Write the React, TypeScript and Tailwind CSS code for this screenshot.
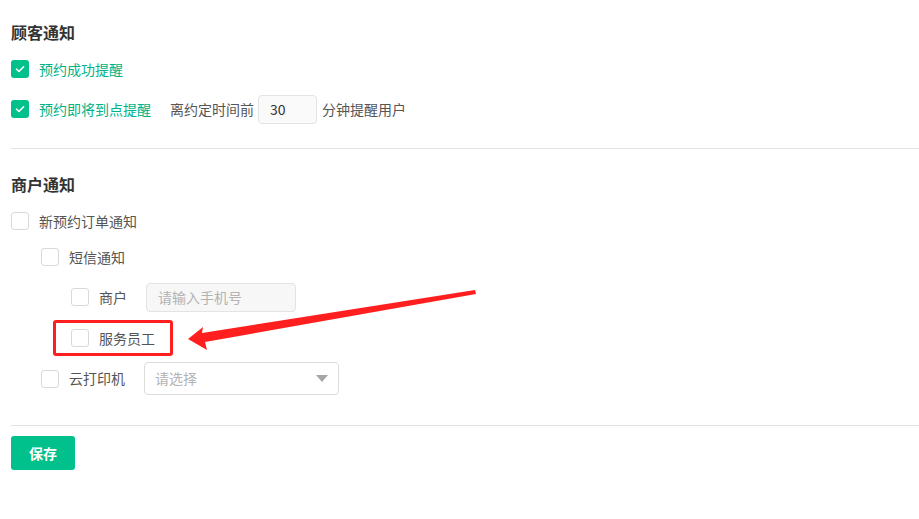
import React from "react";

const font = { fontFamily: '"Noto Sans CJK SC", "Noto Sans", sans-serif' };

function Box({ checked }: { checked?: boolean }) {
  if (checked) {
    return (
      <span className="w-[18px] h-[18px] rounded-[3px] bg-[#00c08b] flex items-center justify-center shrink-0">
        <svg width="12" height="12" viewBox="0 0 12 12" fill="none">
          <path d="M2.5 6.2l2.4 2.3L9.6 3.8" stroke="white" strokeWidth="1.6" strokeLinecap="round" strokeLinejoin="round" />
        </svg>
      </span>
    );
  }
  return <span className="w-[18px] h-[18px] rounded-[3px] border border-[#d9d9d9] bg-white shrink-0" />;
}

export default function App() {
  return (
    <div className="relative w-[919px] h-[519px] bg-white overflow-hidden" style={font}>
      <div className="pl-[11px] pt-[20px]">
        <div className="h-[24px] flex items-center text-[16px] font-bold text-[#333]">顾客通知</div>

        <div className="mt-[11px] h-[28px] flex items-center">
          <Box checked />
          <span className="ml-[10px] text-[14px] text-[#00b386]">预约成功提醒</span>
        </div>

        <div className="mt-[11px] h-[30px] flex items-center">
          <Box checked />
          <span className="ml-[10px] text-[14px] text-[#00b386]">预约即将到点提醒</span>
          <span className="ml-[19px] text-[14px] text-[#555]">离约定时间前</span>
          <input
            defaultValue="30"
            className="ml-[4px] w-[59px] h-[29px] rounded-[4px] border border-[#e3e3e3] bg-[#fafafa] px-[11px] text-[14px] text-[#333] outline-none"
          />
          <span className="ml-[5px] text-[14px] text-[#555]">分钟提醒用户</span>
        </div>

        <div className="mt-[24px] border-t border-[#e2e2e2]" />

        <div className="mt-[23px] h-[24px] flex items-center text-[16px] font-bold text-[#333]">商户通知</div>

        <div className="mt-[11px] h-[28px] flex items-center">
          <Box />
          <span className="ml-[10px] text-[14px] text-[#555]">新预约订单通知</span>
        </div>

        <div className="mt-[8px] h-[28px] flex items-center pl-[30px]">
          <Box />
          <span className="ml-[10px] text-[14px] text-[#555]">短信通知</span>
        </div>

        <div className="mt-[11px] h-[30px] flex items-center pl-[60px]">
          <Box />
          <span className="ml-[10px] text-[14px] text-[#555]">商户</span>
          <input
            disabled
            placeholder="请输入手机号"
            className="ml-[19px] w-[150px] h-[29px] rounded-[4px] border border-[#e3e3e3] bg-[#f7f7f7] px-[11px] text-[14px] placeholder:text-[#b3b3b3] outline-none"
          />
        </div>

        <div className="mt-[8px] pl-[42px]">
          <div className="w-[120px] h-[36px] border-[3px] border-[#ff1f1f] rounded-[3px] flex items-center pl-[15px]">
            <Box />
            <span className="ml-[10px] text-[14px] text-[#555]">服务员工</span>
          </div>
        </div>

        <div className="mt-[6px] h-[33px] flex items-center pl-[30px]">
          <Box />
          <span className="ml-[10px] text-[14px] text-[#555]">云打印机</span>
          <div className="ml-[19px] w-[195px] h-[33px] rounded-[4px] border border-[#dcdcdc] bg-white flex items-center justify-between px-[10px]">
            <span className="text-[14px] text-[#b3b3b3]">请选择</span>
            <svg width="12" height="7" viewBox="0 0 12 7">
              <path d="M0 0h12L6 7z" fill="#a6a6a6" />
            </svg>
          </div>
        </div>

        <div className="mt-[30px] border-t border-[#e2e2e2]" />

        <button className="mt-[10px] w-[64px] h-[34px] rounded-[3px] bg-[#00c08b] text-white text-[14px] font-bold">
          保存
        </button>
      </div>

      <svg className="absolute left-0 top-0 pointer-events-none" width="919" height="519">
        <polygon
          points="188,339 203,327 202,333 475,290 476,294 205,342 207,350"
          fill="#ff1f1f"
        />
      </svg>
    </div>
  );
}
